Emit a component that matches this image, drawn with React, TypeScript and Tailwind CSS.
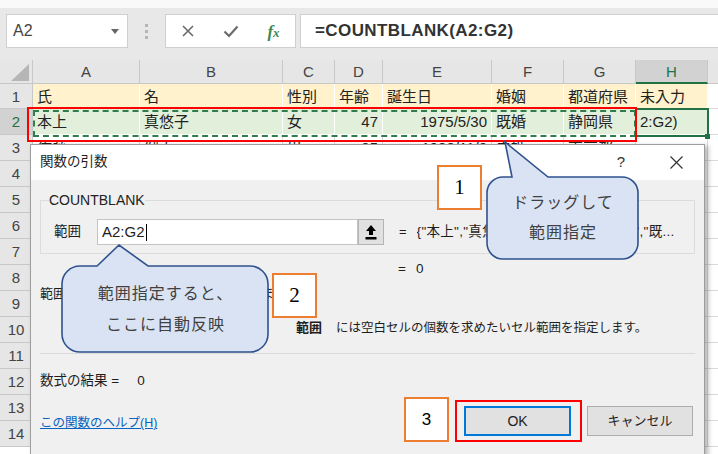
import React from 'react';

const COL_WIDTHS = ['w-[107px]', 'w-[143px]', 'w-[52px]', 'w-[48px]', 'w-[109px]', 'w-[72px]', 'w-[72px]', 'w-[72px]', 'w-[80px]'];
const LETTERS = ['A', 'B', 'C', 'D', 'E', 'F', 'G', 'H', ''];

const DATA: Record<number, string[]> = {
  1: ['氏', '名', '性別', '年齢', '誕生日', '婚姻', '都道府県', '未入力', ''],
  2: ['本上', '真悠子', '女', '47', '1975/5/30', '既婚', '静岡県', '2:G2)', ''],
  3: ['佐藤', '健太', '男', '35', '1988/11/2', '未婚', '東京都', '', ''],
};

const ROW_NUMBERS = [1, 2, 3, 4, 5, 6, 7, 8, 9, 10, 11, 12, 13, 14];

function cellTone(row: number, col: number) {
  if (row === 1 && col < 8) return 'bg-[#fff2cc] border-white';
  if (row === 2 && col < 8) return 'bg-[#e2efda] border-white';
  return 'bg-white border-[#dadada]';
}

function Toolbar() {
  return (
    <div className="h-[60px] bg-[#e8e8e8]">
      <div className="h-[8px] bg-[#f9f9f9]" />
      <div className="flex items-center pt-[6px]">
        <div className="ml-[6px] flex h-[34px] w-[122px] items-center border border-[#cfcfcf] bg-white pl-[6px] pr-[8px]">
          <span className="text-[16px] text-[#444]">A2</span>
          <svg className="ml-auto" width="8" height="5" viewBox="0 0 8 5">
            <path d="M0 0 H8 L4 5 Z" fill="#666" />
          </svg>
        </div>
        <div className="flex w-[37px] flex-col items-center gap-[3px]">
          <span className="h-[3px] w-[3px] bg-[#b5b5b5]" />
          <span className="h-[3px] w-[3px] bg-[#b5b5b5]" />
          <span className="h-[3px] w-[3px] bg-[#b5b5b5]" />
        </div>
        <div className="grid h-[34px] w-[131px] grid-cols-3 items-center border border-[#cfcfcf] bg-white">
          <div className="flex justify-center">
            <svg width="14" height="14" viewBox="0 0 14 14">
              <path d="M2 2 L12 12 M12 2 L2 12" stroke="#6a6a6a" strokeWidth="1.6" fill="none" />
            </svg>
          </div>
          <div className="flex justify-center">
            <svg width="16" height="14" viewBox="0 0 16 14">
              <path d="M1.5 7.5 L6 12 L14.5 2.5" stroke="#6a6a6a" strokeWidth="2.2" fill="none" />
            </svg>
          </div>
          <div className="flex justify-center">
            <span className="font-['Liberation_Serif',serif] text-[17px] font-bold italic leading-none text-[#3d8a52]">
              f<span className="text-[13px]">x</span>
            </span>
          </div>
        </div>
        <div className="ml-[4px] flex h-[34px] flex-1 items-center border border-r-0 border-[#cfcfcf] bg-white pl-[14px]">
          <span className="text-[17px] font-bold tracking-[0.4px] text-[#333]">=COUNTBLANK(A2:G2)</span>
        </div>
      </div>
    </div>
  );
}

function Sheet() {
  return (
    <div>
      <div className="flex h-[24px]">
        <div className="relative w-[33px] shrink-0 border-b border-r border-[#c8c8c8] bg-[#e6e6e6]">
          <svg className="absolute bottom-[2px] right-[3px]" width="18" height="17" viewBox="0 0 18 17">
            <path d="M18 0 V17 H0 Z" fill="#b6b6b6" />
          </svg>
        </div>
        {LETTERS.map((l, i) => (
          <div
            key={i}
            className={`${COL_WIDTHS[i]} flex shrink-0 items-center justify-center border-r text-[15px] leading-none ${
              l === 'H'
                ? 'border-b-2 border-b-[#217346] border-r-[#c8c8c8] bg-[#d2d2d2] text-[#217346]'
                : 'border-b border-[#c8c8c8] bg-[#e6e6e6] text-[#444]'
            }`}
          >
            {l}
          </div>
        ))}
      </div>
      {ROW_NUMBERS.map((r) => (
        <div key={r} className={`flex ${r === 1 ? 'h-[25px]' : 'h-[26px]'}`}>
          <div
            className={`flex w-[33px] shrink-0 items-center justify-center border-b border-r border-[#c8c8c8] text-[15px] leading-none ${
              r === 2 ? 'bg-[#d2d2d2] text-[#217346]' : 'bg-[#e6e6e6] text-[#444]'
            }`}
          >
            {r}
          </div>
          {COL_WIDTHS.map((w, c) => {
            const text = DATA[r]?.[c] ?? '';
            const numeric = /^[\d/]+$/.test(text);
            return (
              <div
                key={c}
                className={`${w} flex shrink-0 items-center overflow-hidden whitespace-nowrap border-b border-r px-[4px] text-[15px] leading-none text-[#222] ${cellTone(r, c)} ${
                  numeric ? 'justify-end' : 'justify-start'
                }`}
              >
                {text}
              </div>
            );
          })}
        </div>
      ))}
    </div>
  );
}

function UploadIcon() {
  return (
    <svg width="12" height="15" viewBox="0 0 12 15">
      <path d="M6 0 L11 6 H8 V10 H4 V6 H1 Z" fill="#000" />
      <rect x="0.5" y="12" width="11" height="2.5" fill="#000" />
    </svg>
  );
}

function Dialog() {
  return (
    <div className="absolute left-[30px] top-[144px] h-[320px] w-[675px] border border-[#9d9d9d] bg-[#f0f0f0] text-[13px] text-[#1e1e1e] shadow-[3px_2px_5px_rgba(0,0,0,0.3)]">
      <div className="flex h-[35px] items-center bg-white pl-[9px] pr-[21px]">
        <span className="text-[13.5px]">関数の引数</span>
        <span className="ml-auto text-[15px] text-[#333]">?</span>
        <svg className="ml-[45px]" width="13" height="13" viewBox="0 0 13 13">
          <path d="M0.5 0.5 L12.5 12.5 M12.5 0.5 L0.5 12.5" stroke="#333" strokeWidth="1.2" fill="none" />
        </svg>
      </div>
      <div className="px-[9px] pt-[11px]">
        <fieldset className="border border-[#dcdcdc] px-[8px] pb-[8px] pt-[10px]">
          <legend className="text-[14px] leading-[18px] text-[#222]">COUNTBLANK</legend>
          <div className="flex items-center">
            <span className="ml-[5px] w-[43px] text-[13.5px]">範囲</span>
            <div className="flex h-[26px] w-[261px] items-center border border-[#c4c4c4] bg-white pl-[4px] text-[15px]">
              A2:G2<span className="ml-[1px] h-[17px] w-[1px] bg-black" />
            </div>
            <div className="flex h-[26px] w-[26px] items-center justify-center border border-[#b4b4b4] bg-[#e1e1e1]">
              <UploadIcon />
            </div>
            <span className="ml-[15px]">=</span>
            <span className="ml-[10px] w-[262px] overflow-hidden whitespace-nowrap text-[13.5px] tracking-[0.3px]">{'{"本上","真悠子","女",47,"1975/5/30","既...'}</span>
          </div>
        </fieldset>
        <div className="flex h-[30px] items-center pl-[358px] text-[13.5px]">
          <span>=</span>
          <span className="ml-[10px]">0</span>
        </div>
        <div className="flex h-[20px] items-center">範囲に含まれる空白セルの個数を返します。</div>
        <div className="mt-[14px] flex h-[20px] items-center pl-[256px]">
          <span className="font-bold">範囲</span>
          <span className="ml-[14px] text-[12.5px]">には空白セルの個数を求めたいセル範囲を指定します。</span>
        </div>
        <div className="mt-[15px] border-t border-[#dadada]" />
        <div className="mt-[17px] flex h-[20px] items-center text-[13.5px]">
          <span>数式の結果 =</span>
          <span className="ml-[18px]">0</span>
        </div>
        <div className="mt-[15px] flex h-[30px] items-center">
          <span className="pt-[5px] text-[12.5px] text-[#0563c1] underline">この関数のヘルプ(H)</span>
          <div className="ml-auto mr-[2px] flex gap-[16px]">
            <div className="flex h-[30px] w-[107px] items-center justify-center border-2 border-[#0078d7] bg-[#e1e1e1] text-[14px]">OK</div>
            <div className="flex h-[30px] w-[106px] items-center justify-center border border-[#adadad] bg-[#e1e1e1] text-[13px]">キャンセル</div>
          </div>
        </div>
      </div>
    </div>
  );
}

function NumberBox({ n, className, serif }: { n: string; className: string; serif?: boolean }) {
  return (
    <div
      className={`absolute flex h-[45px] w-[45px] items-center justify-center border-2 border-[#ed7d31] bg-white text-black ${
        serif ? "font-['Liberation_Serif',serif] text-[21px]" : 'text-[17px]'
      } ${className}`}
    >
      {n}
    </div>
  );
}

export default function App() {
  return (
    <div className="relative h-[454px] w-[718px] overflow-hidden bg-white font-['Liberation_Sans','Noto_Sans_CJK_JP',sans-serif]">
      <Toolbar />
      <Sheet />

      {/* selection + marching ants */}
      <div className="absolute left-[635px] top-[108px] h-[29px] w-[74px] border-2 border-[#217346]" />
      <div className="absolute left-[705px] top-[134px] h-[5px] w-[5px] bg-[#217346]" />
      <div className="absolute left-[33px] top-[110px] h-[27px] w-[603px] border-2 border-dashed border-[#2e7d4a]" />
      <div className="absolute left-[27px] top-[107px] h-[35px] w-[610px] border-2 border-[#ff0000]" />

      <Dialog />

      {/* annotations */}
      <NumberBox n="1" serif className="left-[437px] top-[165px]" />
      <NumberBox n="2" serif className="left-[272px] top-[273px]" />
      <NumberBox n="3" className="left-[404px] top-[397px]" />
      <div className="absolute left-[455px] top-[400px] h-[42px] w-[127px] border-2 border-[#ff0000]" />

      <div className="absolute left-[486px] top-[140px] h-[121px] w-[154px]">
        <svg className="absolute inset-0" width="154" height="121" viewBox="0 0 154 121">
          <path
            d="M17 37 H26 L19 2 L62 37 H136 A16 16 0 0 1 152 53 V103 A16 16 0 0 1 136 119 H17 A16 16 0 0 1 1 103 V53 A16 16 0 0 1 17 37 Z"
            fill="#dae3f3"
            stroke="#2f528f"
            strokeWidth="1.6"
          />
        </svg>
        <div className="absolute inset-x-0 bottom-[2px] top-[37px] flex flex-col items-center justify-center text-[16px] leading-[30px] tracking-[1px] text-[#404040]">
          <span>ドラッグして</span>
          <span>範囲指定</span>
        </div>
      </div>

      <div className="absolute left-[61px] top-[243px] h-[111px] w-[209px]">
        <svg className="absolute inset-0" width="209" height="111" viewBox="0 0 209 111">
          <path
            d="M19 23 H36 L58 2 L87 23 H189 A18 18 0 0 1 207 41 V91 A18 18 0 0 1 189 109 H19 A18 18 0 0 1 1 91 V41 A18 18 0 0 1 19 23 Z"
            fill="#dae3f3"
            stroke="#2f528f"
            strokeWidth="1.6"
          />
        </svg>
        <div className="absolute inset-x-0 bottom-[2px] top-[23px] flex flex-col items-center justify-center text-[16px] leading-[31px] tracking-[1px] text-[#404040]">
          <span>範囲指定すると、</span>
          <span>ここに自動反映</span>
        </div>
      </div>
    </div>
  );
}
